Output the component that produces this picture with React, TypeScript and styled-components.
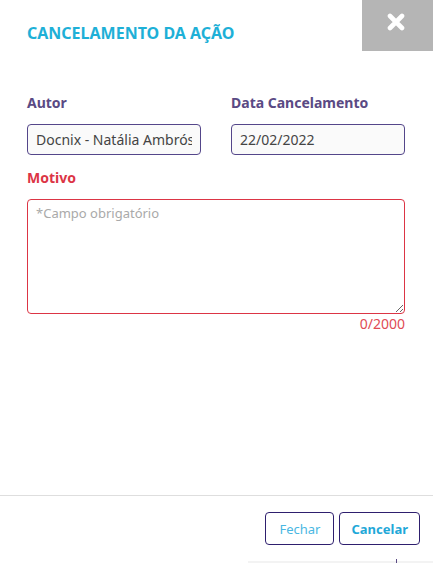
import React from "react";
import styled, { createGlobalStyle } from "styled-components";

const Global = createGlobalStyle`
  html, body { margin: 0; padding: 0; background: #fff; }
  body { font-family: "Noto Sans", "Open Sans", sans-serif; }
  * { box-sizing: border-box; }
`;

const Modal = styled.div`
  width: 433px;
  height: 563px;
  display: flex;
  flex-direction: column;
  background: #fff;
  position: relative;
`;

const Header = styled.div`
  display: flex;
  justify-content: space-between;
  align-items: flex-start;
  height: 51px;
`;

const Title = styled.h1`
  margin: 0;
  padding: 22px 0 0 27px;
  font-size: 16px;
  font-weight: 700;
  color: #1eb0d7;
  line-height: 22px;
  letter-spacing: 0;
`;

const CloseButton = styled.button`
  width: 71px;
  height: 51px;
  border: none;
  background: #b5b5b5;
  display: flex;
  justify-content: center;
  align-items: flex-start;
  padding-top: 13px;
  padding-left: 3px;
  cursor: pointer;
`;

const Body = styled.div`
  flex: 1;
  padding: 42px 28px 0 27px;
  display: flex;
  flex-direction: column;
`;

const Row = styled.div`
  display: grid;
  grid-template-columns: 174px 174px;
  column-gap: 30px;
`;

const Field = styled.div`
  display: flex;
  flex-direction: column;
`;

const Label = styled.label<{ $error?: boolean }>`
  font-size: 14px;
  font-weight: 700;
  line-height: 20px;
  color: ${(p) => (p.$error ? "#dc3545" : "#5a4a84")};
  margin-bottom: 11px;
`;

const Input = styled.input`
  height: 31px;
  width: 100%;
  border: 1px solid #54468a;
  border-radius: 4px;
  background: #fafafa;
  font-family: "Noto Sans", "Open Sans", sans-serif;
  font-size: 14px;
  color: #444;
  padding: 0 8px;
  outline: none;
`;

const MotivoBlock = styled.div`
  margin-top: 13px;
  display: flex;
  flex-direction: column;
`;

const TextArea = styled.textarea`
  height: 115px;
  width: 378px;
  border: 1px solid #dc3545;
  border-radius: 4px;
  background: #fff;
  font-family: "Noto Sans", "Open Sans", sans-serif;
  font-size: 13px;
  line-height: 18px;
  padding: 4px 8px;
  color: #444;
  outline: none;
  resize: vertical;
  margin-top: 0;
  &::placeholder { color: #a9a9a9; }
`;

const Counter = styled.div`
  width: 378px;
  text-align: right;
  font-size: 14px;
  line-height: 18px;
  color: #e04b55;
  margin-top: 1px;
`;

const Footer = styled.div`
  border-top: 1px solid #dedede;
  height: 66px;
  display: flex;
  justify-content: flex-end;
  align-items: flex-start;
  padding: 16px 13px 0 0;
  gap: 5px;
`;

const Button = styled.button<{ $primary?: boolean }>`
  height: 33px;
  padding: 0 ${(p) => (p.$primary ? "11px" : "13px")};
  border: 1px solid #2e1f6e;
  border-radius: 4px;
  background: #fff;
  font-family: "Noto Sans", "Open Sans", sans-serif;
  font-size: 13px;
  font-weight: ${(p) => (p.$primary ? 700 : 400)};
  color: ${(p) => (p.$primary ? "#1fa8d8" : "#4ab7e2")};
  cursor: pointer;
`;

const BottomStrip = styled.div`
  height: 2px;
  margin-left: 248px;
  background: #f3f3f3;
  position: relative;
`;

const Tick = styled.span`
  position: absolute;
  left: 148px;
  top: -2px;
  width: 1px;
  height: 4px;
  background: #5a4a84;
`;

export default function App() {
  return (
    <>
      <Global />
      <Modal>
        <Header>
          <Title>CANCELAMENTO DA AÇÃO</Title>
          <CloseButton aria-label="Fechar">
            <svg width="18" height="18" viewBox="0 0 18 18">
              <path d="M3 3 L15 15 M15 3 L3 15" stroke="#fff" strokeWidth="4.6" strokeLinecap="round" />
            </svg>
          </CloseButton>
        </Header>
        <Body>
          <Row>
            <Field>
              <Label>Autor</Label>
              <Input readOnly value="Docnix - Natália Ambrósio" />
            </Field>
            <Field>
              <Label>Data Cancelamento</Label>
              <Input readOnly value="22/02/2022" />
            </Field>
          </Row>
          <MotivoBlock>
            <Label $error>Motivo</Label>
            <TextArea placeholder="*Campo obrigatório" />
            <Counter>0/2000</Counter>
          </MotivoBlock>
        </Body>
        <Footer>
          <Button>Fechar</Button>
          <Button $primary>Cancelar</Button>
        </Footer>
        <BottomStrip>
          <Tick />
        </BottomStrip>
      </Modal>
    </>
  );
}
